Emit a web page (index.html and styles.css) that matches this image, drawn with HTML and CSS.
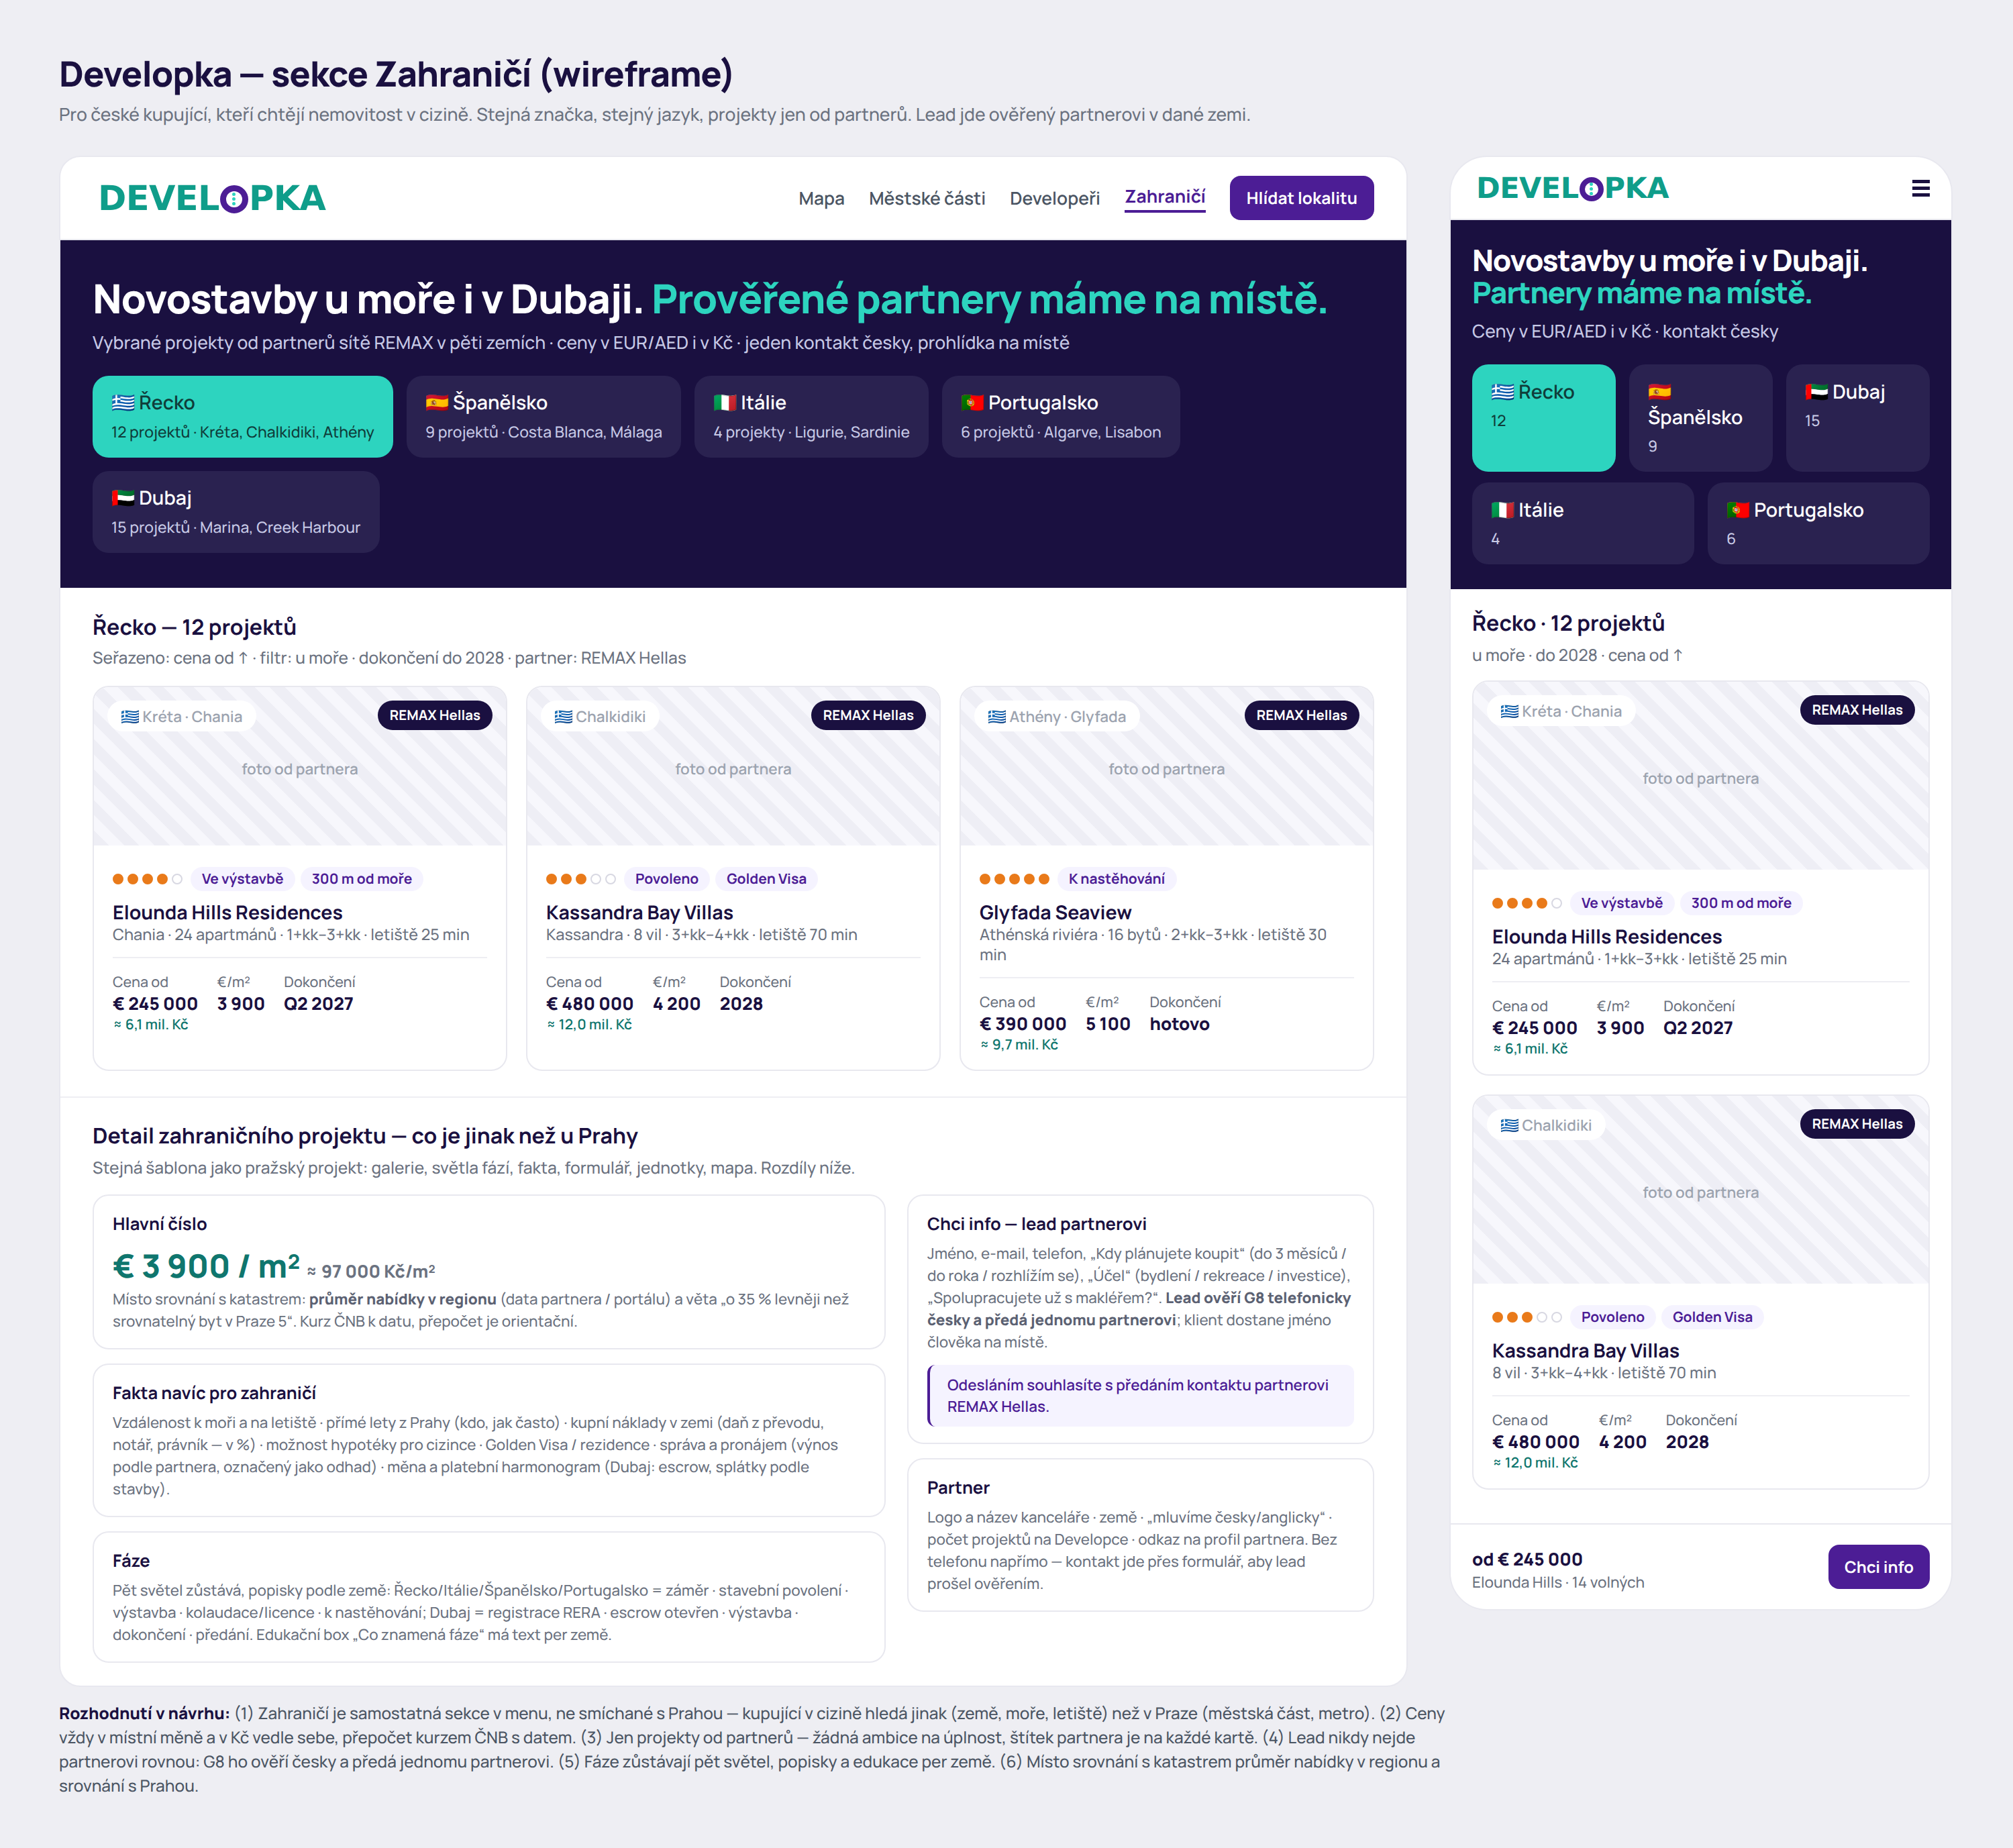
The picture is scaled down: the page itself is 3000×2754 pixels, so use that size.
FILE: index.html
```html
<!DOCTYPE html>
<html lang="cs">
<head>
  <meta charset="UTF-8" />
  <title>Developka | Zahraničí</title>
  <link rel="stylesheet" href="styles.css">
</head>
<body>
  <h1 class="page-title">Developka — sekce Zahraničí (wireframe)</h1>
  <p class="page-sub">Pro české kupující, kteří chtějí nemovitost v cizině. Stejná značka, stejný jazyk, projekty jen od partnerů. Lead jde ověřený partnerovi v dané zemi.</p>

  <div class="layout">
    <!-- DESKTOP -->
    <div class="frame desktop">
      <header class="topbar">
        <div class="logo">DEVEL<span class="logo-o"><i></i><i></i><i></i></span>PKA</div>
        <nav class="nav">
          <a>Mapa</a>
          <a>Městské části</a>
          <a>Developeři</a>
          <a class="active">Zahraničí</a>
          <span class="btn">Hlídat lokalitu</span>
        </nav>
      </header>

      <section class="hero">
        <h2>Novostavby u moře i v Dubaji. <em>Prověřené partnery máme na místě.</em></h2>
        <p class="hero-sub">Vybrané projekty od partnerů sítě REMAX v pěti zemích · ceny v EUR/AED i v Kč · jeden kontakt česky, prohlídka na místě</p>
        <div class="chips">
          <div class="chip on"><b>🇬🇷 Řecko</b><small>12 projektů · Kréta, Chalkidiki, Athény</small></div>
          <div class="chip"><b>🇪🇸 Španělsko</b><small>9 projektů · Costa Blanca, Málaga</small></div>
          <div class="chip"><b>🇮🇹 Itálie</b><small>4 projekty · Ligurie, Sardinie</small></div>
          <div class="chip"><b>🇵🇹 Portugalsko</b><small>6 projektů · Algarve, Lisabon</small></div>
          <div class="chip"><b>🇦🇪 Dubaj</b><small>15 projektů · Marina, Creek Harbour</small></div>
        </div>
      </section>

      <section class="listing">
        <h3>Řecko — 12 projektů</h3>
        <p class="muted">Seřazeno: cena od ↑ · filtr: u moře · dokončení do 2028 · partner: REMAX Hellas</p>
        <div class="cards">
          <article class="card">
            <div class="photo">
              <span class="place">🇬🇷 Kréta · Chania</span><span class="partner">REMAX Hellas</span>
              <span class="photo-label">foto od partnera</span>
            </div>
            <div class="card-body">
              <div class="tags">
                <span class="dots"><i class="f"></i><i class="f"></i><i class="f"></i><i class="f"></i><i></i></span>
                <span class="tag">Ve výstavbě</span><span class="tag">300 m od moře</span>
              </div>
              <h4>Elounda Hills Residences</h4>
              <p class="meta">Chania · 24 apartmánů · 1+kk–3+kk · letiště 25 min</p>
              <div class="stats">
                <div><span>Cena od</span><b>€ 245 000</b><em>≈ 6,1 mil. Kč</em></div>
                <div><span>€/m²</span><b>3 900</b></div>
                <div><span>Dokončení</span><b>Q2 2027</b></div>
              </div>
            </div>
          </article>
          <article class="card">
            <div class="photo">
              <span class="place">🇬🇷 Chalkidiki</span><span class="partner">REMAX Hellas</span>
              <span class="photo-label">foto od partnera</span>
            </div>
            <div class="card-body">
              <div class="tags">
                <span class="dots"><i class="f"></i><i class="f"></i><i class="f"></i><i></i><i></i></span>
                <span class="tag">Povoleno</span><span class="tag">Golden Visa</span>
              </div>
              <h4>Kassandra Bay Villas</h4>
              <p class="meta">Kassandra · 8 vil · 3+kk–4+kk · letiště 70 min</p>
              <div class="stats">
                <div><span>Cena od</span><b>€ 480 000</b><em>≈ 12,0 mil. Kč</em></div>
                <div><span>€/m²</span><b>4 200</b></div>
                <div><span>Dokončení</span><b>2028</b></div>
              </div>
            </div>
          </article>
          <article class="card">
            <div class="photo">
              <span class="place">🇬🇷 Athény · Glyfada</span><span class="partner">REMAX Hellas</span>
              <span class="photo-label">foto od partnera</span>
            </div>
            <div class="card-body">
              <div class="tags">
                <span class="dots"><i class="f"></i><i class="f"></i><i class="f"></i><i class="f"></i><i class="f"></i></span>
                <span class="tag">K nastěhování</span>
              </div>
              <h4>Glyfada Seaview</h4>
              <p class="meta">Athénská riviéra · 16 bytů · 2+kk–3+kk · letiště 30 min</p>
              <div class="stats">
                <div><span>Cena od</span><b>€ 390 000</b><em>≈ 9,7 mil. Kč</em></div>
                <div><span>€/m²</span><b>5 100</b></div>
                <div><span>Dokončení</span><b>hotovo</b></div>
              </div>
            </div>
          </article>
        </div>
      </section>

      <section class="detail">
        <h3>Detail zahraničního projektu — co je jinak než u Prahy</h3>
        <p class="muted">Stejná šablona jako pražský projekt: galerie, světla fází, fakta, formulář, jednotky, mapa. Rozdíly níže.</p>
        <div class="detail-grid">
          <div class="col">
            <div class="box">
              <h5>Hlavní číslo</h5>
              <div class="big">€ 3 900 / m² <small>≈ 97 000 Kč/m²</small></div>
              <p class="tight">Místo srovnání s katastrem: <strong>průměr nabídky v regionu</strong> (data partnera / portálu) a věta „o 35 % levněji než srovnatelný byt v Praze 5“. Kurz ČNB k datu, přepočet je orientační.</p>
            </div>
            <div class="box">
              <h5>Fakta navíc pro zahraničí</h5>
              <p>Vzdálenost k moři a na letiště · přímé lety z Prahy (kdo, jak často) · kupní náklady v zemi (daň z převodu, notář, právník — v %) · možnost hypotéky pro cizince · Golden Visa / rezidence · správa a pronájem (výnos podle partnera, označený jako odhad) · měna a platební harmonogram (Dubaj: escrow, splátky podle stavby).</p>
            </div>
            <div class="box">
              <h5>Fáze</h5>
              <p>Pět světel zůstává, popisky podle země: Řecko/Itálie/Španělsko/Portugalsko = záměr · stavební povolení · výstavba · kolaudace/licence · k nastěhování; Dubaj = registrace RERA · escrow otevřen · výstavba · dokončení · předání. Edukační box „Co znamená fáze“ má text per země.</p>
            </div>
          </div>
          <div class="col">
            <div class="box">
              <h5>Chci info — lead partnerovi</h5>
              <p>Jméno, e-mail, telefon, „Kdy plánujete koupit“ (do 3 měsíců / do roka / rozhlížím se), „Účel“ (bydlení / rekreace / investice), „Spolupracujete už s makléřem?“. <strong>Lead ověří G8 telefonicky česky a předá jednomu partnerovi</strong>; klient dostane jméno člověka na místě.</p>
              <div class="consent">Odesláním souhlasíte s předáním kontaktu partnerovi REMAX Hellas.</div>
            </div>
            <div class="box">
              <h5>Partner</h5>
              <p class="narrow">Logo a název kanceláře · země · „mluvíme česky/anglicky“ · počet projektů na Developce · odkaz na profil partnera. Bez telefonu napřímo — kontakt jde přes formulář, aby lead prošel ověřením.</p>
            </div>
          </div>
        </div>
      </section>
    </div>

    <!-- MOBILE -->
    <div class="frame phone">
      <header class="topbar">
        <div class="logo">DEVEL<span class="logo-o"><i></i><i></i><i></i></span>PKA</div>
        <span class="burger"><i></i><i></i><i></i></span>
      </header>

      <section class="hero">
        <h2>Novostavby u moře i v Dubaji.<br><em>Partnery máme na místě.</em></h2>
        <p class="hero-sub">Ceny v EUR/AED i v Kč · kontakt česky</p>
        <div class="chips">
          <div class="chip on"><b>🇬🇷 Řecko</b><small>12</small></div>
          <div class="chip"><b>🇪🇸 Španělsko</b><small>9</small></div>
          <div class="chip"><b>🇦🇪 Dubaj</b><small>15</small></div>
          <div class="chip wide"><b>🇮🇹 Itálie</b><small>4</small></div>
          <div class="chip wide"><b>🇵🇹 Portugalsko</b><small>6</small></div>
        </div>
      </section>

      <section class="listing">
        <h3>Řecko · 12 projektů</h3>
        <p class="muted">u moře · do 2028 · cena od ↑</p>
        <div class="cards">
          <article class="card">
            <div class="photo">
              <span class="place">🇬🇷 Kréta · Chania</span><span class="partner">REMAX Hellas</span>
              <span class="photo-label">foto od partnera</span>
            </div>
            <div class="card-body">
              <div class="tags">
                <span class="dots"><i class="f"></i><i class="f"></i><i class="f"></i><i class="f"></i><i></i></span>
                <span class="tag">Ve výstavbě</span><span class="tag">300 m od moře</span>
              </div>
              <h4>Elounda Hills Residences</h4>
              <p class="meta">24 apartmánů · 1+kk–3+kk · letiště 25 min</p>
              <div class="stats">
                <div><span>Cena od</span><b>€ 245 000</b><em>≈ 6,1 mil. Kč</em></div>
                <div><span>€/m²</span><b>3 900</b></div>
                <div><span>Dokončení</span><b>Q2 2027</b></div>
              </div>
            </div>
          </article>
          <article class="card">
            <div class="photo">
              <span class="place">🇬🇷 Chalkidiki</span><span class="partner">REMAX Hellas</span>
              <span class="photo-label">foto od partnera</span>
            </div>
            <div class="card-body">
              <div class="tags">
                <span class="dots"><i class="f"></i><i class="f"></i><i class="f"></i><i></i><i></i></span>
                <span class="tag">Povoleno</span><span class="tag">Golden Visa</span>
              </div>
              <h4>Kassandra Bay Villas</h4>
              <p class="meta">8 vil · 3+kk–4+kk · letiště 70 min</p>
              <div class="stats">
                <div><span>Cena od</span><b>€ 480 000</b><em>≈ 12,0 mil. Kč</em></div>
                <div><span>€/m²</span><b>4 200</b></div>
                <div><span>Dokončení</span><b>2028</b></div>
              </div>
            </div>
          </article>
        </div>
      </section>

      <footer class="sticky">
        <div class="sticky-text"><b>od € 245 000</b><small>Elounda Hills · 14 volných</small></div>
        <span class="btn">Chci info</span>
      </footer>
    </div>
  </div>

  <p class="note"><strong>Rozhodnutí v návrhu:</strong> (1) Zahraničí je samostatná sekce v menu, ne smíchané s Prahou — kupující v cizině hledá jinak (země, moře, letiště) než v Praze (městská část, metro). (2) Ceny vždy v místní měně a v Kč vedle sebe, přepočet kurzem ČNB s datem. (3) Jen projekty od partnerů — žádná ambice na úplnost, štítek partnera je na každé kartě. (4) Lead nikdy nejde partnerovi rovnou: G8 ho ověří česky a předá jednomu partnerovi. (5) Fáze zůstávají pět světel, popisky a edukace per země. (6) Místo srovnání s katastrem průměr nabídky v regionu a srovnání s Prahou.</p>
</body>
</html>
```

FILE: styles.css
```css
/* ---------- BASE ---------- */
*{margin:0;padding:0;box-sizing:border-box;}
html,body{background:#eeeef3;}
body{
  font-family:Manrope,Inter,"Noto Color Emoji",sans-serif;
  text-rendering:geometricPrecision;
  color:#1a1040;
  padding:80px 88px 0;
}
.page-title{font-size:52px;line-height:60px;font-weight:800;letter-spacing:-.02em;}
.page-sub{font-size:26.5px;line-height:40px;color:#6b7280;margin-top:10px;font-weight:500;}

.layout{display:flex;align-items:flex-start;gap:62px;margin-top:42px;}
.frame{background:#fff;border:2px solid #e8e8ef;overflow:hidden;flex:none;}
.desktop{width:2010px;border-radius:32px;}
.phone{width:750px;border-radius:56px;}

/* ---------- TOPBAR ---------- */
.topbar{display:flex;align-items:center;justify-content:space-between;padding:0 48px 0 56px;height:124px;border-bottom:2px solid #e8e8ef;}
.logo{font-family:"DejaVu Sans",sans-serif;font-size:51px;font-weight:700;color:#0f9d8a;display:flex;align-items:center;letter-spacing:-.012em;line-height:1;padding-top:3px;}
.logo-o{width:42px;height:42px;border-radius:50%;border:9px solid #4c1d95;display:flex;flex-direction:column;align-items:center;justify-content:center;gap:2px;margin:0 1px;}
.logo-o i{width:5px;height:5px;border-radius:50%;background:#2dd4bf;}
.nav{display:flex;align-items:center;gap:36px;font-size:26.4px;font-weight:600;color:#4b5563;}
.nav .active{color:#4c1d95;border-bottom:4px solid #4c1d95;padding-bottom:3px;font-weight:700;}
.btn{background:#4c1d95;color:#fff;font-size:24.5px;font-weight:700;padding:0 25px;height:66px;border-radius:16px;display:inline-flex;align-items:center;}

/* ---------- HERO ---------- */
.hero{background:#1a1040;padding:48px 48px 52px;color:#fff;}
.hero h2{font-size:60px;line-height:76px;font-weight:800;letter-spacing:-.02em;}
.hero h2 em{font-style:normal;color:#2dd4bf;}
.hero-sub{font-size:26.5px;line-height:40px;color:#c7c9e6;margin-top:8px;font-weight:500;}
.chips{display:flex;flex-wrap:wrap;gap:20px;margin-top:30px;}
.chip{background:#2a2250;border-radius:24px;padding:19px 28px;height:122px;}
.chip b{display:block;font-size:28.5px;line-height:42px;font-weight:600;}
.chip small{display:block;font-size:22.9px;line-height:32px;color:#c7c9e6;margin-top:7px;font-weight:500;}
.chip.on{background:#2dd4bf;color:#0f3d3a;}
.chip.on small{color:#0f3d3a;}

/* ---------- LISTING ---------- */
.listing{padding:34px 48px 38px;}
h3{font-size:32px;line-height:48px;font-weight:700;}
.muted{font-size:24.5px;line-height:38px;color:#6b7280;margin-top:4px;font-weight:500;}
.cards{display:flex;gap:28px;margin-top:22px;}
.card{flex:1;border:2px solid #e8e8ef;border-radius:24px;overflow:hidden;}
.photo{height:236px;display:flex;justify-content:space-between;align-items:flex-start;padding:20px;position:relative;
  background:repeating-linear-gradient(45deg,#eeeef5 0 16px,#f7f7fc 16px 32px);}
.place{background:#fff;border-radius:24px;height:46px;padding:0 20px;display:inline-flex;align-items:center;font-size:22.5px;color:#9ca3af;font-weight:600;}
.partner{background:#1a1040;color:#fff;border-radius:24px;height:44px;padding:0 18px;display:inline-flex;align-items:center;font-size:20.4px;font-weight:700;}
.photo-label{position:absolute;inset:0;display:flex;align-items:center;justify-content:center;padding-top:6px;font-size:22.5px;color:#9ca3af;font-weight:600;}
.card-body{padding:32px 28px 24px;}
.tags{display:flex;align-items:center;gap:8px;}
.dots{display:flex;gap:6px;margin-right:4px;}
.dots i{width:16px;height:16px;border-radius:50%;border:2px solid #d8d8e2;}
.dots i.f{background:#e97a1a;border-color:#e97a1a;}
.tag{background:#f5f3ff;color:#4c1d95;font-size:21px;font-weight:700;height:36px;padding:0 17px;border-radius:18px;display:inline-flex;align-items:center;}
h4{font-size:28.5px;line-height:36px;font-weight:700;margin-top:14px;}
.meta{font-size:23.4px;line-height:30px;color:#6b7280;font-weight:500;padding-bottom:18px;border-bottom:2px solid #eeeef3;}
.stats{display:flex;gap:28px;margin-top:22px;}
.stats span{display:block;font-size:21.5px;line-height:28px;color:#6b7280;font-weight:500;}
.stats b{display:block;font-size:26px;line-height:34px;font-weight:800;}
.stats em{display:block;font-style:normal;font-size:21px;line-height:26px;color:#0f766e;font-weight:600;margin-top:2px;}

/* ---------- DETAIL ---------- */
.detail{border-top:2px solid #eeeef3;padding:32px 48px 34px;}
.detail .muted{margin-top:6px;}
.detail-grid{display:flex;gap:32px;margin-top:20px;align-items:flex-start;}
.col{display:flex;flex-direction:column;gap:21px;}
.col:first-child{width:1182px;}
.col:last-child{width:696px;}
.box{border:2px solid #e8e8ef;border-radius:24px;padding:24px 28px;}
.box h5{font-size:25.6px;line-height:36px;font-weight:700;}
.box p{font-size:22.4px;line-height:33px;color:#6b7280;font-weight:500;margin-top:9px;}
.box p.tight{margin-top:4px;}
.box p.narrow{padding-right:6px;}
.box strong{font-weight:800;color:#5b6172;}
.big{font-size:48px;line-height:56px;font-weight:800;color:#0f766e;margin-top:17px;}
.big small{font-size:26px;line-height:1;color:#6b7280;font-weight:800;margin-left:-3px;}
.consent{background:#f5f3ff;border-left:4px solid #4c1d95;border-radius:12px;padding:14px 26px;color:#4c1d95;font-size:22.4px;line-height:32px;font-weight:600;margin-top:18px;}

/* ---------- PHONE ---------- */
.phone .topbar{height:94px;padding:0 32px 0 38px;}
.phone .logo{font-size:43px;}
.phone .logo-o{width:36px;height:36px;border-width:8px;}
.burger{display:flex;flex-direction:column;gap:5px;}
.burger i{width:26px;height:5px;background:#1a1040;}
.phone .hero{padding:36px 32px 37px;}
.phone .hero h2{font-size:44px;line-height:48px;letter-spacing:-.03em;}
.phone .hero-sub{margin-top:13px;}
.phone .chips{display:grid;grid-template-columns:repeat(6,1fr);gap:16px 20px;margin-top:30px;}
.phone .chip{grid-column:span 2;height:auto;min-height:122px;padding:22px 28px;}
.phone .chip b{line-height:38px;}
.phone .chip small{margin-top:8px;}
.phone .chip.wide{grid-column:span 3;}
.phone .listing{padding:26px 32px 50px;}
.phone .muted{margin-top:6px;}
.phone .cards{flex-direction:column;margin-top:18px;}
.phone .photo{height:280px;}
.phone .card-body{padding-bottom:25px;}
.phone .btn{font-size:24px;padding:0 24px;}
.sticky{border-top:2px solid #e8e8ef;display:flex;justify-content:space-between;align-items:center;padding:0 32px;height:128px;}
.sticky-text{padding-top:10px;}
.sticky b{display:block;font-size:26px;line-height:36px;font-weight:800;}
.sticky small{display:block;font-size:22.5px;line-height:34px;color:#6b7280;font-weight:500;}

/* ---------- NOTE ---------- */
.note{width:2070px;font-size:24.35px;line-height:36px;color:#4b5563;font-weight:500;margin-top:22px;}
.note strong{color:#1a1040;font-weight:800;}
```
